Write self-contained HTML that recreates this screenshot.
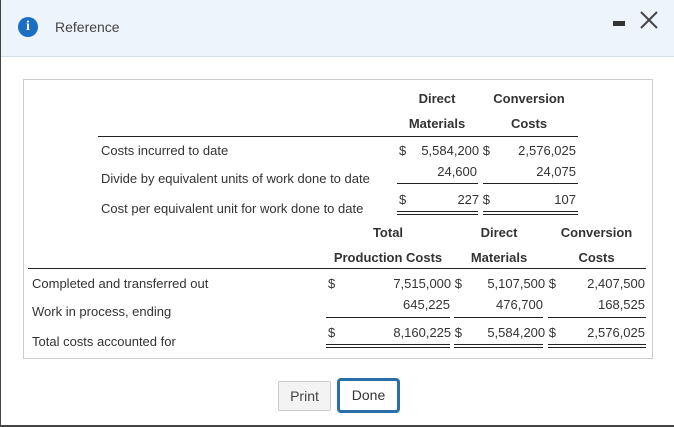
<!DOCTYPE html>
<html><head><meta charset="utf-8"><style>
*{margin:0;padding:0;box-sizing:border-box}
body{width:674px;height:427px;background:#fff;position:relative;overflow:hidden;font-family:"Liberation Sans",Arial,sans-serif;color:#333;font-size:13px}
.t{position:absolute;white-space:nowrap;line-height:14px}
.r{text-align:right}
.c{text-align:center}
.h{color:#333;font-weight:bold;font-size:13px}
.l{position:absolute;height:0;border-top:1px solid #222}
.d{position:absolute;height:4px;border-top:1px solid #222;border-bottom:1px solid #222}
</style></head><body>
<div style="position:absolute;left:0;top:0;width:674px;height:57px;background:#eef4fb;border-bottom:1px solid #d6e0ea"></div>
<div style="position:absolute;left:0;top:0;width:1px;height:427px;background:#444"></div>
<div style="position:absolute;left:0;top:425px;width:674px;height:2px;background:#444"></div>
<div style="position:absolute;left:18px;top:17px;width:20px;height:20px;border-radius:50%;background:#1a6fc4;color:#fff;font:bold 14px 'Liberation Serif',serif;text-align:center;line-height:20px">i</div>
<div class="t" style="left:55px;top:19px;font-size:14px;color:#444;line-height:16px">Reference</div>
<div style="position:absolute;left:613px;top:21px;width:12px;height:5px;background:#333"></div>
<svg style="position:absolute;left:640px;top:11px" width="18" height="18"><path d="M1 1L17 17M17 1L1 17" stroke="#444" stroke-width="2"/></svg>
<div style="position:absolute;left:23px;top:79px;width:630px;height:280px;border:1px solid #ccc"></div>

<div class="t h c" style="left:397px;top:92px;width:80px">Direct</div>
<div class="t h c" style="left:397px;top:117px;width:80px">Materials</div>
<div class="t h c" style="left:483px;top:92px;width:92px">Conversion</div>
<div class="t h c" style="left:483px;top:117px;width:92px">Costs</div>
<div class="l" style="left:98px;top:136px;width:480px"></div>
<div class="t" style="left:101px;top:144px">Costs incurred to date</div>
<div class="t" style="left:101px;top:172px">Divide by equivalent units of work done to date</div>
<div class="t" style="left:101px;top:202px">Cost per equivalent unit for work done to date</div>
<div class="t" style="left:399px;top:144px">$</div>
<div class="t r" style="left:400px;top:144px;width:90px">5,584,200 $</div>
<div class="t r" style="left:480px;top:144px;width:96px">2,576,025</div>
<div class="t r" style="left:400px;top:165px;width:77px">24,600</div>
<div class="t r" style="left:480px;top:165px;width:96px">24,075</div>
<div class="l" style="left:397px;top:183px;width:81px"></div>
<div class="l" style="left:483px;top:183px;width:95px"></div>
<div class="t" style="left:399px;top:193px">$</div>
<div class="t r" style="left:400px;top:193px;width:90px">227 $</div>
<div class="t r" style="left:480px;top:193px;width:96px">107</div>
<div class="d" style="left:397px;top:211px;width:81px"></div>
<div class="d" style="left:483px;top:211px;width:95px"></div>

<div class="t h c" style="left:328px;top:226px;width:120px">Total</div>
<div class="t h c" style="left:328px;top:251px;width:120px">Production Costs</div>
<div class="t h c" style="left:454px;top:226px;width:90px">Direct</div>
<div class="t h c" style="left:454px;top:251px;width:90px">Materials</div>
<div class="t h c" style="left:548px;top:226px;width:97px">Conversion</div>
<div class="t h c" style="left:548px;top:251px;width:97px">Costs</div>
<div class="l" style="left:28px;top:268px;width:618px"></div>
<div class="t" style="left:32px;top:277px">Completed and transferred out</div>
<div class="t" style="left:32px;top:305px">Work in process, ending</div>
<div class="t" style="left:32px;top:335px">Total costs accounted for</div>
<div class="t" style="left:328px;top:277px">$</div>
<div class="t r" style="left:340px;top:277px;width:122px">7,515,000 $</div>
<div class="t r" style="left:450px;top:277px;width:106px">5,107,500 $</div>
<div class="t r" style="left:545px;top:277px;width:100px">2,407,500</div>
<div class="t r" style="left:340px;top:298px;width:110px">645,225</div>
<div class="t r" style="left:450px;top:298px;width:93px">476,700</div>
<div class="t r" style="left:545px;top:298px;width:100px">168,525</div>
<div class="l" style="left:326px;top:317px;width:124px"></div>
<div class="l" style="left:454px;top:317px;width:89px"></div>
<div class="l" style="left:548px;top:317px;width:98px"></div>
<div class="t" style="left:328px;top:326px">$</div>
<div class="t r" style="left:340px;top:326px;width:122px">8,160,225 $</div>
<div class="t r" style="left:450px;top:326px;width:106px">5,584,200 $</div>
<div class="t r" style="left:545px;top:326px;width:100px">2,576,025</div>
<div class="d" style="left:326px;top:344px;width:124px"></div>
<div class="d" style="left:454px;top:344px;width:89px"></div>
<div class="d" style="left:548px;top:344px;width:98px"></div>

<div style="position:absolute;left:278px;top:381px;width:53px;height:30px;background:#f3f3f3;border:1px solid #ccc;border-radius:2px;font-size:14px;color:#444;text-align:center;line-height:28px">Print</div>
<div style="position:absolute;left:337px;top:378px;width:63px;height:35px;background:#fff;border:3px solid #2a6fa8;border-radius:4px;font-size:14px;color:#333;text-align:center;line-height:29px">Done</div>
</body></html>
